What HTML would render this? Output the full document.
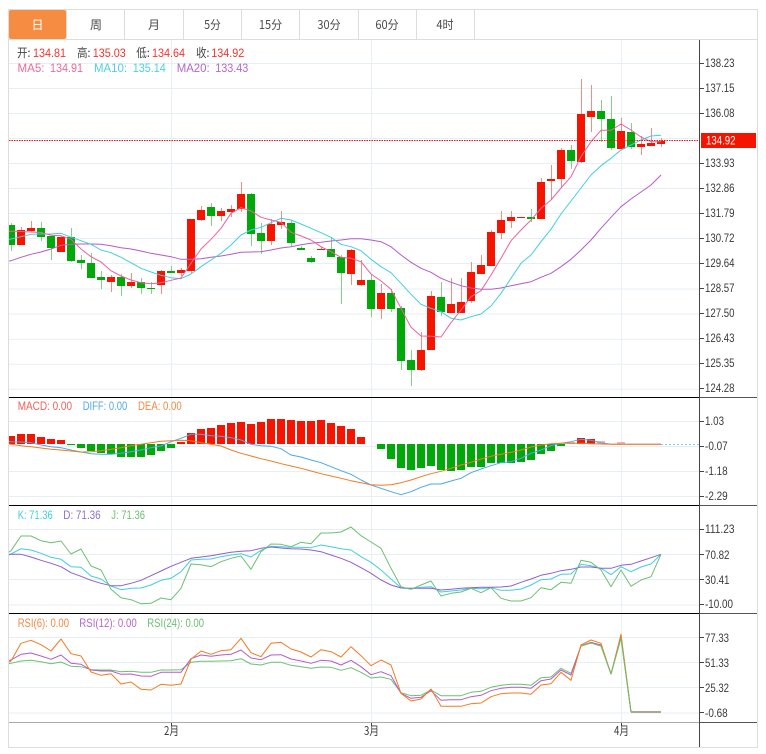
<!DOCTYPE html>
<html lang="zh">
<head>
<meta charset="utf-8">
<title>K线图</title>
<style>
html,body{margin:0;padding:0;background:#fff;width:766px;height:754px;overflow:hidden}
svg{display:block;position:absolute;left:0;top:0}
text{font-family:"Liberation Sans","Noto Sans CJK SC",sans-serif;font-size:12px}
.cjk{font-family:"Noto Sans CJK SC","Liberation Sans",sans-serif}
.tab{fill:#4a4a4a;text-anchor:middle}
.ax{fill:#3a3a3a;font-size:12px}
.l{fill:none;stroke-width:1;stroke-linejoin:round}
</style>
</head>
<body>
<svg width="766" height="754" viewBox="0 0 766 754" xmlns="http://www.w3.org/2000/svg">
<defs><clipPath id="c"><rect x="9" y="40" width="690" height="683"/></clipPath></defs>

<!-- outer box and tabs -->
<rect x="8.5" y="9.5" width="749" height="738" fill="#fff" stroke="#ddd"/>
<rect x="9" y="10" width="57" height="29" rx="2" fill="#f58c41"/>
<path d="M66.5 10V39M124.5 10V39M183.5 10V39M241.5 10V39M299.5 10V39M358.5 10V39M416.5 10V39M474.5 10V39M9 39.5H757" stroke="#ddd" fill="none"/>
<text class="tab cjk" x="37.5" y="29" style="fill:#fff">日</text>
<text class="tab cjk" x="96" y="29">周</text>
<text class="tab cjk" x="154" y="29">月</text>
<text class="tab cjk" x="212.5" y="29" textLength="16.7" lengthAdjust="spacingAndGlyphs">5分</text>
<text class="tab cjk" x="270.5" y="29" textLength="23.3" lengthAdjust="spacingAndGlyphs">15分</text>
<text class="tab cjk" x="329" y="29" textLength="23.3" lengthAdjust="spacingAndGlyphs">30分</text>
<text class="tab cjk" x="387" y="29" textLength="23.3" lengthAdjust="spacingAndGlyphs">60分</text>
<text class="tab cjk" x="445" y="29" textLength="17.3" lengthAdjust="spacingAndGlyphs">4时</text>

<!-- grid -->
<path fill="none" stroke="#e9f0f4" d="M171.5 40V722M371.5 40V722M621.5 40V722"/>
<path fill="none" stroke="#e8eff4" d="M9 63.5H699M9 88.5H699M9 113.5H699M9 138.5H699M9 163.5H699M9 188.5H699M9 213.5H699M9 238.5H699M9 263.5H699M9 289H699M9 314H699M9 339.2H699M9 364.2H699M9 389.3H699M9 421.5H699M9 446.5H699M9 471.5H699M9 496.5H699M9 529.5H699M9 554.5H699M9 579.5H699M9 605H699M9 637.5H699M9 662.5H699M9 687.5H699M9 713H699"/>

<g clip-path="url(#c)">
<!-- wicks -->
<path shape-rendering="crispEdges" fill="none" stroke="#f98a80" d="M21.5 227V245M31.5 221V232M61.5 236V252M111.5 275V292M131.5 273V288M161.5 270V294M181.5 268V276M191.5 219V273M201.5 206V221M221.5 208V221M231.5 205V217M241.5 182V212M271.5 219V245M281.5 211V229M321.5 247V250M351.5 249V285M361.5 260V286M381.5 284V319M421.5 332V371M431.5 291V350M451.5 278V313M461.5 278V313M471.5 262V303M481.5 255V274M491.5 230V266M501.5 211V239M511.5 211V228M541.5 178V219M551.5 165V200M561.5 148V187M581.5 79V163M591.5 85V132M621.5 118V149M641.5 136V155M651.5 128V146M661.5 138V147"/>
<path shape-rendering="crispEdges" fill="none" stroke="#7fd384" d="M11.5 223V251M41.5 222V241M51.5 236V260M71.5 228V262M81.5 255V269M91.5 253V278M101.5 271V289M121.5 274V296M141.5 278V294M151.5 282V294M171.5 266V273M211.5 203V226M251.5 193V246M261.5 223V254M291.5 220V246M301.5 246V250M311.5 256V263M331.5 237V257M341.5 255V304M371.5 274V317M391.5 289V312M401.5 306V370M411.5 350V386M441.5 282V316M531.5 209V222M571.5 145V169M601.5 100V142M611.5 96V150M631.5 123V149"/>
<!-- candle bodies -->
<path shape-rendering="crispEdges" fill="#f51400" d="M17 230h8v15h-8zM27 228h8v3h-8zM57 237h8v15h-8zM107 277h8v5h-8zM127 282h8v4h-8zM157 271h8v14h-8zM177 270h8v3h-8zM187 219h8v52h-8zM197 210h8v10h-8zM217 211h8v5h-8zM227 209h8v3h-8zM237 194h8v15h-8zM267 224h8v17h-8zM277 222h8v3h-8zM317 249h8v1h-8zM347 250h8v24h-8zM357 280h8v5h-8zM377 293h8v16h-8zM417 350h8v20h-8zM427 296h8v54h-8zM447 304h8v9h-8zM457 302h8v11h-8zM467 272h8v29h-8zM477 265h8v9h-8zM487 232h8v34h-8zM497 220h8v13h-8zM507 217h8v4h-8zM517 217h8v1h-8zM537 182h8v37h-8zM547 179h8v2h-8zM557 150h8v29h-8zM577 114h8v48h-8zM587 111h8v6h-8zM617 131h8v18h-8zM637 144h8v3h-8zM647 143h8v3h-8zM657 141h8v3h-8z"/>
<path shape-rendering="crispEdges" fill="#00a80a" d="M7 225h8v20h-8zM37 228h8v9h-8zM47 236h8v12h-8zM67 237h8v24h-8zM77 260h8v3h-8zM87 263h8v15h-8zM97 277h8v3h-8zM117 277h8v9h-8zM137 282h8v6h-8zM147 288h8v1h-8zM167 271h8v2h-8zM207 207h8v9h-8zM247 194h8v40h-8zM257 233h8v8h-8zM287 223h8v20h-8zM297 248h8v2h-8zM307 258h8v4h-8zM327 249h8v8h-8zM337 257h8v16h-8zM367 280h8v29h-8zM387 293h8v16h-8zM397 308h8v53h-8zM407 360h8v10h-8zM437 297h8v15h-8zM527 217h8v2h-8zM567 150h8v11h-8zM597 111h8v8h-8zM607 119h8v29h-8zM627 132h8v15h-8z"/>

<!-- MA lines -->
<polyline class="l" stroke="#b45cc8" points="9,261 11,260.7 21,257.3 31,254.3 41,252 51,249 61,245.3 71,244.3 81,244 91,244 101,244.3 111,245.7 121,247.7 131,249 141,251 151,253.3 161,255 171,256.7 181,259.3 191,259.3 201,258.7 211,257.3 221,256 231,254.3 241,252.3 251,252 261,251.7 271,250 281,248 291,246.7 301,244.7 311,243.3 321,242.3 331,241 341,240 351,238.7 361,238.7 371,240 381,241.7 391,246.7 401,255 411,262.3 421,268.3 431,272.3 441,278.3 451,282.3 461,285.7 471,288 481,289.3 491,289.3 501,288 511,285.7 521,283.7 531,281.7 541,277.3 551,273.3 561,266.7 571,259.3 581,250 591,240 601,228.3 611,217.3 621,206.7 631,199 641,192 651,185 661,175"/>
<polyline class="l" stroke="#40cfe0" points="9,239.5 11,239 21,236.7 31,234.3 41,234 51,234 61,233.3 71,237.3 81,240.7 91,244.3 101,250 111,252.7 121,257.3 131,262.7 141,268.3 151,272 161,275.3 171,277.7 181,278.7 191,274 201,266.7 211,260 221,253.3 231,245 241,235 251,230 261,227.3 271,222.7 281,218.3 291,220 301,224 311,228.3 321,232.7 331,237.3 341,244.3 351,246.7 361,250.7 371,259.3 381,266.7 391,272.7 401,283.3 411,294.3 421,304.3 431,308.3 441,311.7 451,318.3 461,320 471,316.7 481,314 491,306 501,293.3 511,278.3 521,263.3 531,255 541,241.7 551,229.3 561,214 571,201 581,188 591,175 601,165.7 611,158.3 621,150 631,145 641,140 651,136 661,135.3"/>
<polyline class="l" stroke="#f0609a" points="9,231.3 11,231.3 21,231.5 31,232 41,232.5 51,235.3 61,235.7 71,239.3 81,249 91,256.7 101,262 111,270.7 121,276 131,280 141,282.7 151,283.7 161,282.7 171,280.3 181,278 191,263.3 201,249 211,239.3 221,228.3 231,213.3 241,207.7 251,211 261,217.3 271,220 281,222.3 291,232.3 301,236 311,240 321,246.7 331,251.7 341,257.3 351,258.3 361,261.7 371,274 381,281 391,289.3 401,308.3 411,327.3 421,336 431,336.3 441,337 451,322.7 461,310 471,296.7 481,290.7 491,275 501,258.3 511,240.7 521,230 531,220 541,208.3 551,200 561,188 571,176.7 581,156.7 591,141.7 601,130.3 611,130.3 621,124 631,130 641,137 651,141.7 661,141.7"/>
</g>

<!-- current price dotted line -->
<path d="M9 140.5H699" stroke="#f01010" stroke-dasharray="1.5 1" fill="none"/>

<!-- MACD histogram -->
<g clip-path="url(#c)">
<path shape-rendering="crispEdges" fill="#f51400" d="M9 436h6v8h-6zM17 434h8v10h-8zM27 434h8v10h-8zM37 437h8v7h-8zM47 439h8v5h-8zM57 440h8v4h-8zM177 442h8v2h-8zM187 433h8v11h-8zM197 429h8v15h-8zM207 428h8v16h-8zM217 425h8v19h-8zM227 423h8v21h-8zM237 422h8v22h-8zM247 424h8v20h-8zM257 422h8v22h-8zM267 419h8v25h-8zM277 419h8v25h-8zM287 420h8v24h-8zM297 421h8v23h-8zM307 421h8v23h-8zM317 420h8v24h-8zM327 423h8v21h-8zM337 426h8v18h-8zM347 429h8v15h-8zM357 437h8v7h-8zM577 438h8v6h-8zM587 439h8v5h-8z"/>
<path shape-rendering="crispEdges" fill="#fbb0a8" d="M597 441h8v3h-8zM567 442h8v2h-8zM617 442h8v2h-8z"/>
<path shape-rendering="crispEdges" fill="#00a80a" d="M67 444h8v1h-8zM77 444h8v4h-8zM87 444h8v7h-8zM97 444h8v9h-8zM107 444h8v10h-8zM117 444h8v13h-8zM127 444h8v13h-8zM137 444h8v13h-8zM147 444h8v11h-8zM157 444h8v7h-8zM167 444h8v4h-8zM377 444h8v5h-8zM387 444h8v15h-8zM397 444h8v24h-8zM407 444h8v26h-8zM417 444h8v24h-8zM427 444h8v22h-8zM437 444h8v26h-8zM447 444h8v27h-8zM457 444h8v26h-8zM467 444h8v23h-8zM477 444h8v23h-8zM487 444h8v19h-8zM497 444h8v19h-8zM507 444h8v19h-8zM517 444h8v18h-8zM527 444h8v16h-8zM537 444h8v10h-8zM547 444h8v7h-8zM557 444h8v2h-8z"/>
<polyline class="l" stroke="#4aa8f0" points="9,441.5 11,441.7 21,442 31,442.7 41,445 51,446.7 61,447.7 71,450 81,452 91,453.7 101,454.3 111,454.3 121,453.3 131,451.7 141,450 151,447.7 161,446 171,441.7 181,438.3 191,434.3 201,434.3 211,435.7 221,436.3 231,437.7 241,440 251,444.3 261,445.7 271,446.3 281,448.7 291,455 301,457 311,460 321,462.7 331,466.7 341,470.7 351,474.3 361,480 371,485 381,488.3 391,491.7 401,494.7 411,491.7 421,487.3 431,484 441,484 451,481 461,478.3 471,472.7 481,469 491,465.7 501,462.7 511,461.7 521,458.3 531,453.3 541,450 551,445.7 561,443.3 571,441.7 581,439.3 591,440.3 601,442.7 611,444.3 661,444.3"/>
<polyline class="l" stroke="#f57a20" points="9,444 11,444.3 21,445.7 31,446.7 41,448 51,449.3 61,450 71,451 81,452 91,451.7 101,450.7 111,449.3 121,447.7 131,445.7 141,444.3 151,442.7 161,441.3 171,440.7 181,440.3 191,440.7 201,442.7 211,444.3 221,446 231,450 241,453.3 251,456 261,458.7 271,461 281,463.7 291,466 301,468.3 311,471 321,473.7 331,476 341,478.3 351,480.7 361,482.7 371,484.7 381,485.3 391,484.7 401,482.7 411,480 421,476.7 431,473.7 441,471.3 451,468.3 461,465 471,462.3 481,459 491,456.3 501,454.3 511,452.3 521,450 531,447 541,445 551,443.7 561,443.3 571,443.3 581,443.3 591,443.7 601,444 611,444.3 661,444.3"/>
<path d="M661 444.5H699" stroke="#7fd0dc" stroke-dasharray="2 2" fill="none"/>

<!-- KDJ -->
<polyline class="l" stroke="#40cfe0" points="9,555 11,554 21,548.7 31,550 41,553.3 51,557.3 61,559.3 71,566.7 81,567.3 91,576 101,579 111,586 121,589.7 131,588.3 141,588 151,585 161,580.3 171,578.3 181,571.7 191,560 201,559.3 211,559 221,556.7 231,555 241,553.7 251,557 261,550.3 271,546.3 281,546.7 291,547.3 301,547.3 311,547.7 321,545 331,546.7 341,548.7 351,550 361,556.7 371,562.3 381,570 391,579 401,587.7 411,589 421,587.3 431,586.7 441,592 451,591 461,590 471,588.3 481,588.7 491,587.7 501,590.3 511,590.3 521,589 531,585 541,579.7 551,579 561,574.3 571,574 581,564.3 591,565.7 601,568.3 611,574.7 621,566.7 631,571.7 641,567 651,564 661,554.3"/>
<polyline class="l" stroke="#8e5fd0" points="9,554.3 11,554.3 21,554.3 31,557 41,560.3 51,563.3 61,566.7 71,572.7 81,576.3 91,580.3 101,583.3 111,585.7 121,585.7 131,583.3 141,580.3 151,575.7 161,571 171,566.3 181,562.3 191,558.3 201,557 211,555.7 221,554 231,552.3 241,551.3 251,550.7 261,548.3 271,547 281,548 291,548.7 301,549 311,550 321,551.7 331,555 341,558.3 351,562.3 361,567.7 371,573.3 381,580 391,585 401,588 411,588.3 421,588.3 431,588.3 441,590 451,589.3 461,588.3 471,587.7 481,587.3 491,587.3 501,587 511,586 521,582.3 531,579 541,575.3 551,573.3 561,570.7 571,569.3 581,567 591,567 601,568.3 611,568.3 621,565.3 631,564.3 641,561 651,557.7 661,554.3"/>
<polyline class="l" stroke="#6cc070" points="9,552 11,550.7 21,536 31,536 41,540.7 51,542.7 61,541 71,554 81,549 91,566 101,570 111,589.3 121,597.7 131,599.7 141,603.7 151,603.3 161,598 171,599.7 181,588.3 191,564 201,564.7 211,566.7 221,561.7 231,558.3 241,556 251,569.3 261,551.7 271,544 281,544.3 291,546.7 301,542.3 311,543.7 321,533 331,533 341,532 351,527 361,535.7 371,542 381,548.3 391,568.3 401,586.7 411,589.3 421,585 431,581 441,596 451,593.3 461,592 471,588.3 481,592.7 491,587.7 501,598.3 511,601 521,601 531,597.7 541,587.7 551,589.7 561,582.3 571,583.3 581,560.3 591,562.3 601,570 611,586.7 621,570 631,586.3 641,580 651,576.7 661,554.3"/>

<!-- RSI -->
<polyline class="l" stroke="#6cc070" points="9,663.5 11,663.3 21,661 31,660.3 41,661.7 51,663.7 61,662 71,666.3 81,666.7 91,669.7 101,670 111,670 121,671.7 131,671.3 141,672.3 151,672.3 161,670 171,670 181,669.7 191,662.3 201,661.3 211,661.3 221,661 231,660.7 241,658.7 251,664 261,665 271,662.3 281,662.3 291,665.3 301,666.7 311,668.3 321,667 331,667.3 341,670.3 351,667.7 361,672.3 371,678 381,677 391,679.3 401,692.7 411,695.7 421,695.3 431,690 441,695.7 451,695.7 461,695.7 471,692.3 481,691.3 491,687.3 501,685.3 511,684.3 521,684.3 531,685.3 541,677.7 551,677 561,668.3 571,673.3 581,646 591,643 601,646 611,674 621,638.3 631,712"/>
<polyline class="l" stroke="#b45cc8" points="9,660.5 11,660 21,654.3 31,653 41,656 51,659.3 61,655 71,663.3 81,664.3 91,670 101,671 111,671 121,674.3 131,674 141,676 151,676.3 161,672.3 171,672.3 181,672.3 191,658.7 201,655 211,656.3 221,655 231,654.3 241,650 251,658 261,659.7 271,655 281,654.7 291,659 301,661 311,663.3 321,660.3 331,661 341,665 351,660.3 361,666.7 371,674.7 381,671.7 391,675.7 401,693.3 411,698.3 421,697.3 431,690.7 441,700.3 451,699.7 461,699.7 471,696.7 481,695.3 491,690.7 501,688.3 511,687.3 521,687.3 531,688.3 541,680.7 551,679 561,670 571,675 581,645.7 591,642.3 601,645 611,674 621,635.7 631,712"/>
<polyline class="l" stroke="#f57a20" points="9,662 11,661 21,643.3 31,640.3 41,644.7 51,651 61,639 71,653.7 81,656 91,672 101,675.3 111,673.7 121,684 131,682 141,689.3 151,690 161,684.3 171,685.3 181,684 191,659.3 201,651 211,654.3 221,650.7 231,649.7 241,638.3 251,652.7 261,656.7 271,643.3 281,642.3 291,649 301,652 311,657 321,649.7 331,651.7 341,657 351,646.7 361,655.7 371,665.7 381,660 391,665 401,693.3 411,701 421,699 431,689 441,706.3 451,706.3 461,706.3 471,703.7 481,703 491,696.7 501,693.7 511,693 521,693 531,694.3 541,685 551,683.7 561,672.3 571,680.3 581,645 591,640 601,643.3 611,674 621,634.3 631,712"/>
<polyline class="l" stroke="#6cc070" points="581,646 591,643 601,646 611,674 621,638.3 631,712"/>
<path d="M631 712H661" stroke="#aca890" stroke-width="2" fill="none"/>
</g>

<!-- separators and axes -->
<path shape-rendering="crispEdges" fill="none" stroke="#000" d="M9 397.5H699M9 505.5H699M9 613.5H699"/>
<path shape-rendering="crispEdges" fill="none" stroke="#555" d="M699 397.5H757M699 505.5H757M699 613.5H757M699 722.5H757"/>
<path shape-rendering="crispEdges" fill="none" stroke="#aaa" d="M9 722.5H699"/>
<path shape-rendering="crispEdges" fill="none" stroke="#444" d="M699.5 40V747"/>
<path shape-rendering="crispEdges" fill="none" stroke="#444" d="M700 63.5h4M700 88.5h4M700 113.5h4M700 163.5h4M700 188.5h4M700 213.5h4M700 238.5h4M700 263.5h4M700 288.5h4M700 313.5h4M700 338.5h4M700 363.5h4M700 388.5h4M700 421.5h4M700 446.5h4M700 471.5h4M700 496.5h4M700 529.5h4M700 554.5h4M700 579.5h4M700 604.5h4M700 637.5h4M700 662.5h4M700 687.5h4M700 712.5h4M171.5 723v3M371.5 723v3M621.5 723v3"/>

<!-- price label -->
<rect x="701" y="133" width="55" height="15" fill="#f51400"/>
<text x="706" y="144.5" fill="#fff" textLength="29.5" lengthAdjust="spacingAndGlyphs">134.92</text>

<!-- axis labels -->
<text class="ax" x="705" y="67" textLength="29.5" lengthAdjust="spacingAndGlyphs">138.23</text>
<text class="ax" x="705" y="92" textLength="29.5" lengthAdjust="spacingAndGlyphs">137.15</text>
<text class="ax" x="705" y="117" textLength="29.5" lengthAdjust="spacingAndGlyphs">136.08</text>
<text class="ax" x="705" y="167" textLength="29.5" lengthAdjust="spacingAndGlyphs">133.93</text>
<text class="ax" x="705" y="192" textLength="29.5" lengthAdjust="spacingAndGlyphs">132.86</text>
<text class="ax" x="705" y="217" textLength="29.5" lengthAdjust="spacingAndGlyphs">131.79</text>
<text class="ax" x="705" y="242" textLength="29.5" lengthAdjust="spacingAndGlyphs">130.72</text>
<text class="ax" x="705" y="267" textLength="29.5" lengthAdjust="spacingAndGlyphs">129.64</text>
<text class="ax" x="705" y="292" textLength="29.5" lengthAdjust="spacingAndGlyphs">128.57</text>
<text class="ax" x="705" y="317" textLength="29.5" lengthAdjust="spacingAndGlyphs">127.50</text>
<text class="ax" x="705" y="342" textLength="29.5" lengthAdjust="spacingAndGlyphs">126.43</text>
<text class="ax" x="705" y="367" textLength="29.5" lengthAdjust="spacingAndGlyphs">125.35</text>
<text class="ax" x="705" y="392" textLength="29.5" lengthAdjust="spacingAndGlyphs">124.28</text>
<text class="ax" x="705" y="425" textLength="19" lengthAdjust="spacingAndGlyphs">1.03</text>
<text class="ax" x="705" y="450" textLength="22.7" lengthAdjust="spacingAndGlyphs">-0.07</text>
<text class="ax" x="705" y="475" textLength="22.7" lengthAdjust="spacingAndGlyphs">-1.18</text>
<text class="ax" x="705" y="500" textLength="22.7" lengthAdjust="spacingAndGlyphs">-2.29</text>
<text class="ax" x="705" y="533" textLength="29.5" lengthAdjust="spacingAndGlyphs">111.23</text>
<text class="ax" x="705" y="559" textLength="24.5" lengthAdjust="spacingAndGlyphs">70.82</text>
<text class="ax" x="705" y="584" textLength="24.5" lengthAdjust="spacingAndGlyphs">30.41</text>
<text class="ax" x="705" y="608" textLength="28" lengthAdjust="spacingAndGlyphs">-10.00</text>
<text class="ax" x="705" y="642" textLength="24" lengthAdjust="spacingAndGlyphs">77.33</text>
<text class="ax" x="705" y="667" textLength="24" lengthAdjust="spacingAndGlyphs">51.33</text>
<text class="ax" x="705" y="692" textLength="24" lengthAdjust="spacingAndGlyphs">25.32</text>
<text class="ax" x="705" y="717" textLength="22.7" lengthAdjust="spacingAndGlyphs">-0.68</text>

<text class="ax cjk" x="164" y="735" textLength="15" lengthAdjust="spacingAndGlyphs">2月</text>
<text class="ax cjk" x="364" y="735" textLength="15" lengthAdjust="spacingAndGlyphs">3月</text>
<text class="ax cjk" x="614" y="735" textLength="15" lengthAdjust="spacingAndGlyphs">4月</text>

<!-- legends -->
<text class="cjk" x="17" y="57" fill="#444" textLength="13.5" lengthAdjust="spacingAndGlyphs">开:</text>
<text x="33" y="57" fill="#f5332b" textLength="33" lengthAdjust="spacingAndGlyphs">134.81</text>
<text class="cjk" x="77" y="57" fill="#444" textLength="13.5" lengthAdjust="spacingAndGlyphs">高:</text>
<text x="92.7" y="57" fill="#f5332b" textLength="33" lengthAdjust="spacingAndGlyphs">135.03</text>
<text class="cjk" x="136.3" y="57" fill="#444" textLength="13.5" lengthAdjust="spacingAndGlyphs">低:</text>
<text x="152" y="57" fill="#f5332b" textLength="33" lengthAdjust="spacingAndGlyphs">134.64</text>
<text class="cjk" x="196" y="57" fill="#444" textLength="13.5" lengthAdjust="spacingAndGlyphs">收:</text>
<text x="211.3" y="57" fill="#f5332b" textLength="33" lengthAdjust="spacingAndGlyphs">134.92</text>

<text x="17.5" y="72" fill="#ee6a96" textLength="27" lengthAdjust="spacingAndGlyphs">MA5:</text>
<text x="50" y="72" fill="#ee6a96" textLength="33" lengthAdjust="spacingAndGlyphs">134.91</text>
<text x="94" y="72" fill="#4fd0e0" textLength="33" lengthAdjust="spacingAndGlyphs">MA10:</text>
<text x="132.7" y="72" fill="#4fd0e0" textLength="33" lengthAdjust="spacingAndGlyphs">135.14</text>
<text x="176.7" y="72" fill="#b765cf" textLength="33" lengthAdjust="spacingAndGlyphs">MA20:</text>
<text x="215.3" y="72" fill="#b765cf" textLength="33" lengthAdjust="spacingAndGlyphs">133.43</text>

<text x="17.7" y="410" fill="#f4605a" textLength="54.3" lengthAdjust="spacingAndGlyphs">MACD: 0.00</text>
<text x="82.7" y="410" fill="#55aaee" textLength="44.6" lengthAdjust="spacingAndGlyphs">DIFF: 0.00</text>
<text x="138" y="410" fill="#f58840" textLength="43.7" lengthAdjust="spacingAndGlyphs">DEA: 0.00</text>

<text x="17.7" y="519" fill="#40cfe0" textLength="35" lengthAdjust="spacingAndGlyphs">K: 71.36</text>
<text x="63.3" y="519" fill="#8e6fd0" textLength="37.4" lengthAdjust="spacingAndGlyphs">D: 71.36</text>
<text x="111.3" y="519" fill="#6cc070" textLength="33.7" lengthAdjust="spacingAndGlyphs">J: 71.36</text>

<text x="17.7" y="627" fill="#f58840" textLength="51.3" lengthAdjust="spacingAndGlyphs">RSI(6): 0.00</text>
<text x="79.3" y="627" fill="#b765cf" textLength="57.4" lengthAdjust="spacingAndGlyphs">RSI(12): 0.00</text>
<text x="147.3" y="627" fill="#6cc070" textLength="56.7" lengthAdjust="spacingAndGlyphs">RSI(24): 0.00</text>
</svg>
</body>
</html>
